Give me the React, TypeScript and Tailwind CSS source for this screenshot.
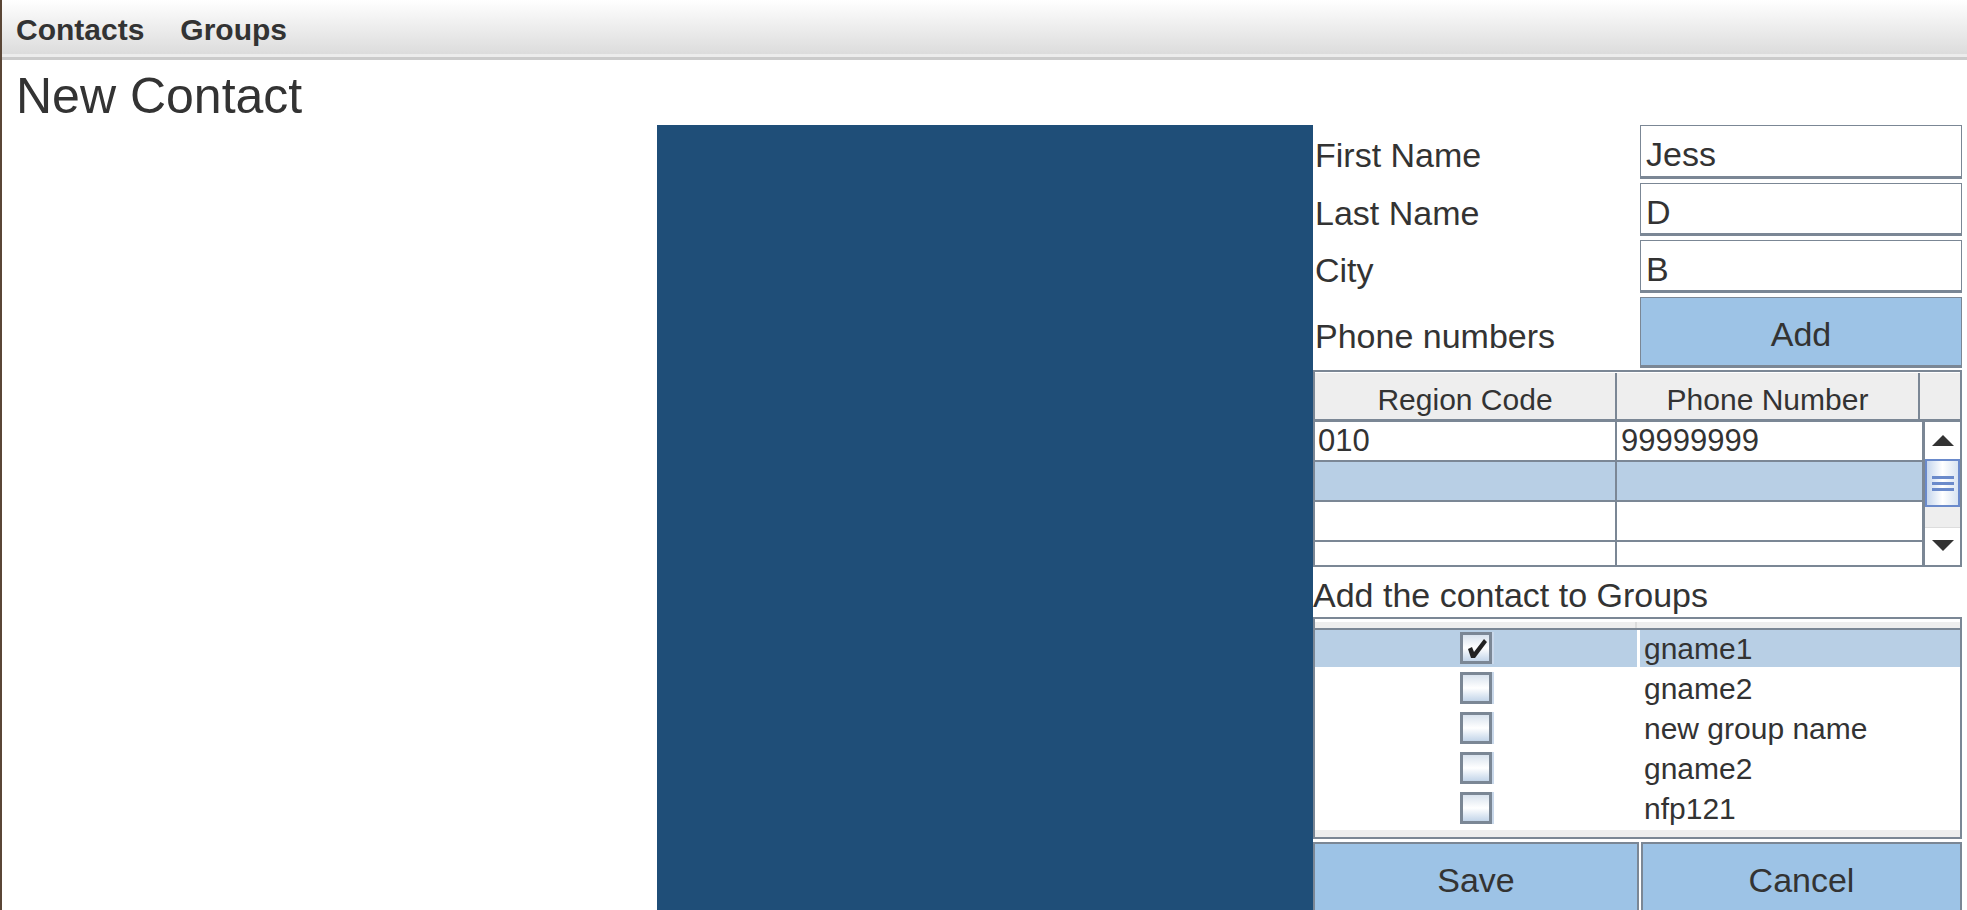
import React from "react";

const groups = [
  { name: "gname1", checked: true },
  { name: "gname2", checked: false },
  { name: "new group name", checked: false },
  { name: "gname2", checked: false },
  { name: "nfp121", checked: false },
];

function Checkbox({ checked }: { checked: boolean }) {
  return (
    <div className="w-[32px] h-[32px] border-[3px] border-[#7b8795] bg-linear-to-b from-[#d9e3ee] via-[#ffffff] to-[#c3d5e9] shadow-[2px_0_0_#c9d8ea]">
      {checked && (
        <svg width="26" height="26" viewBox="0 0 26 26">
          <polygon points="5,14 9,12 11,17 21,4 24,7 12,23 8,23" fill="#222" />
        </svg>
      )}
    </div>
  );
}

function Field({ label, value }: { label: string; value: string }) {
  return (
    <div className="flex h-full">
      <div className="w-[327px] pl-[2px] flex items-center pt-[6px] text-[34px] leading-[38px]">{label}</div>
      <div className="w-[322px] border border-b-[3px] border-[#7b8795] flex items-center pl-[5px] pt-[6px] text-[34px] leading-[38px]">
        {value}
      </div>
    </div>
  );
}

export default function App() {
  const rows = [
    ["010", "99999999", false],
    ["", "", true],
    ["", "", false],
    ["", "", false],
  ] as const;
  return (
    <div className="w-[1967px] h-[910px] overflow-hidden bg-white flex flex-col border-l-2 border-[#5a4636] text-[#333333] font-['Liberation_Sans',Arial,sans-serif]">
      <div className="h-[54px] shrink-0 bg-linear-to-b from-[#ffffff] to-[#dcdcdc] flex gap-[36px] pl-[14px] pt-[13px] text-[30px] leading-[34px] font-bold">
        <span>Contacts</span>
        <span>Groups</span>
      </div>
      <div className="h-[3px] shrink-0 bg-[#ececec]" />
      <div className="h-[3px] shrink-0 bg-[#cbcbcb]" />
      <div className="h-[65px] shrink-0 pt-[8px] pl-[14px] text-[50px] leading-[56px]">New Contact</div>
      <div className="flex flex-1 min-h-0 overflow-hidden">
        <div className="w-[655px] shrink-0" />
        <div className="w-[656px] shrink-0 bg-[#1f4e78]" />
        <div className="w-[649px] shrink-0 flex flex-col">
          <div className="h-[54px] shrink-0">
            <Field label="First Name" value="Jess" />
          </div>
          <div className="h-[53px] shrink-0 mt-[4px]">
            <Field label="Last Name" value="D" />
          </div>
          <div className="h-[53px] shrink-0 mt-[4px]">
            <Field label="City" value="B" />
          </div>
          <div className="h-[71px] shrink-0 mt-[4px] flex">
            <div className="w-[327px] pl-[2px] flex items-center pt-[6px] text-[34px] leading-[38px]">Phone numbers</div>
            <div className="w-[322px] bg-[#9dc3e6] border border-b-[3px] border-[#7b8795] flex items-center justify-center pt-[4px] text-[34px] leading-[38px]">
              Add
            </div>
          </div>

          {/* phone table */}
          <div className="mt-[2px] h-[197px] shrink-0 border-2 border-[#7b8795] flex flex-col">
            <div className="h-[50px] shrink-0 flex bg-[#eeeeee] border-t border-t-white border-b-[3px] border-b-[#7b8795] text-[30px] leading-[34px]">
              <div className="w-[302px] border-r-2 border-[#7b8795] flex items-center justify-center pt-[8px]">Region Code</div>
              <div className="w-[303px] border-r-2 border-[#7b8795] flex items-center justify-center pt-[8px]">Phone Number</div>
              <div className="flex-1" />
            </div>
            <div className="flex flex-1 min-h-0">
              <div className="w-[607px] overflow-hidden flex flex-col">
                {rows.map((r, i) => (
                  <div
                    key={i}
                    className={`h-[40px] shrink-0 flex border-b-2 border-[#7b8795] text-[31px] leading-[36px] ${r[2] ? "bg-[#b8cfe5]" : "bg-white"}`}
                  >
                    <div className="w-[302px] border-r-2 border-[#7b8795] flex items-center pl-[3px]">{r[0]}</div>
                    <div className="flex-1 flex items-center pl-[4px]">{r[1]}</div>
                  </div>
                ))}
              </div>
              <div className="flex-1 border-l-[3px] border-[#7b8795] flex flex-col bg-[#eeeeee]">
                <div className="h-[37px] shrink-0 bg-white flex items-center justify-center">
                  <svg width="22" height="11" viewBox="0 0 22 11">
                    <polygon points="0,11 11,0 22,11" fill="#333" />
                  </svg>
                </div>
                <div className="h-[48px] shrink-0 border-2 border-[#6a8acb] bg-linear-to-r from-[#c6d7ee] via-[#ffffff] to-[#d8e4f2] flex flex-col items-center justify-center gap-[3px]">
                  <div className="w-[22px] h-[3px] bg-[#6a8acb]" />
                  <div className="w-[22px] h-[3px] bg-[#6a8acb]" />
                  <div className="w-[22px] h-[3px] bg-[#6a8acb]" />
                </div>
                <div className="h-[20px] shrink-0 bg-[#eeeeee]" />
                <div className="flex-1 bg-white border-t border-[#dddddd] flex items-start justify-center pt-[12px]">
                  <svg width="22" height="11" viewBox="0 0 22 11">
                    <polygon points="0,0 22,0 11,11" fill="#333" />
                  </svg>
                </div>
              </div>
            </div>
          </div>

          <div className="h-[50px] shrink-0 pt-[9px] text-[34px] leading-[38px]">Add the contact to Groups</div>

          {/* groups table */}
          <div className="h-[222px] shrink-0 border-2 border-[#7b8795] flex flex-col">
            <div className="h-[11px] shrink-0 flex bg-[#eeeeee] border-t-[3px] border-t-white border-b-2 border-b-[#7b8795]">
              <div className="w-[322px] border-r-2 border-[#dcdcdc]" />
              <div className="flex-1" />
            </div>
            {groups.map((g, i) => (
              <div key={i} className="h-[40px] shrink-0 flex">
                <div className={`w-[322px] h-[37px] flex justify-center pt-[2px] ${g.checked ? "bg-[#b8cfe5]" : ""}`}>
                  <Checkbox checked={g.checked} />
                </div>
                <div className="w-[3px]" />
                <div className={`flex-1 h-[37px] flex items-center pl-[4px] text-[30px] leading-[34px] ${g.checked ? "bg-[#b8cfe5]" : ""}`}>
                  {g.name}
                </div>
              </div>
            ))}
            <div className="flex-1 bg-[#eeeeee]" />
          </div>

          <div className="mt-[3px] flex gap-[2px] h-[75px] shrink-0">
            <div className="w-[326px] bg-[#9dc3e6] border-2 border-[#7b8795] flex justify-center pt-[17px] text-[34px] leading-[38px]">Save</div>
            <div className="flex-1 bg-[#9dc3e6] border-2 border-[#7b8795] flex justify-center pt-[17px] text-[34px] leading-[38px]">Cancel</div>
          </div>
        </div>
      </div>
    </div>
  );
}
